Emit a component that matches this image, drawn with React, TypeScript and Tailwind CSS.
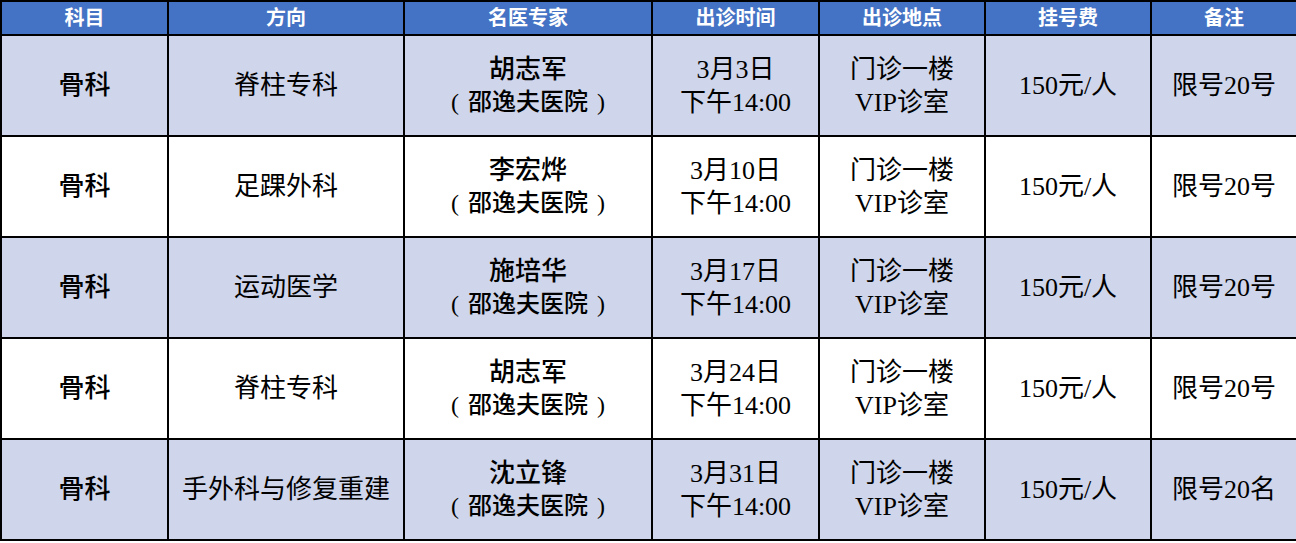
const HEADERS = ["科目", "方向", "名医专家", "出诊时间", "出诊地点", "挂号费", "备注"];
const WIDTHS = ["w-[167px]", "w-[236px]", "w-[248px]", "w-[167px]", "w-[166px]", "w-[166px]", "w-[146px]"];

const ROWS = [
  { dir: "脊柱专科", doc: "胡志军", date: "3月3日", note: "限号20号" },
  { dir: "足踝外科", doc: "李宏烨", date: "3月10日", note: "限号20号" },
  { dir: "运动医学", doc: "施培华", date: "3月17日", note: "限号20号" },
  { dir: "脊柱专科", doc: "胡志军", date: "3月24日", note: "限号20号" },
  { dir: "手外科与修复重建", doc: "沈立锋", date: "3月31日", note: "限号20名" },
];

const cell = "border-2 border-black text-center align-middle p-0";

export default function App() {
  return (
    <div className="w-[1296px] h-[543px] bg-white font-['Liberation_Serif','Noto_Sans_CJK_SC',serif]">
      <table className="w-[1296px] border-collapse table-fixed">
        <colgroup>
          {WIDTHS.map((w, i) => (
            <col key={i} className={w} />
          ))}
        </colgroup>
        <thead>
          <tr className="h-[34px] bg-[#4472c4]">
            {HEADERS.map((h) => (
              <th key={h} className={`${cell} text-white text-[20px] font-bold leading-[30px]`}>
                {h}
              </th>
            ))}
          </tr>
        </thead>
        <tbody className="text-[26px] leading-[33px] text-black">
          {ROWS.map((r, i) => (
            <tr key={i} className={`h-[101px] ${i % 2 === 0 ? "bg-[#cfd5ea]" : "bg-white"}`}>
              <td className={`${cell} font-medium`}>骨科</td>
              <td className={cell}>{r.dir}</td>
              <td className={`${cell} font-medium`}>
                <div>{r.doc}</div>
                <div className="text-[24px]">
                  <span className="inline-block w-[26px] text-center">(</span>
                  邵逸夫医院
                  <span className="inline-block w-[26px] text-center">)</span>
                </div>
              </td>
              <td className={cell}>
                <div>{r.date}</div>
                <div>下午14:00</div>
              </td>
              <td className={cell}>
                <div>门诊一楼</div>
                <div>VIP诊室</div>
              </td>
              <td className={cell}>150元/人</td>
              <td className={cell}>{r.note}</td>
            </tr>
          ))}
        </tbody>
      </table>
    </div>
  );
}
